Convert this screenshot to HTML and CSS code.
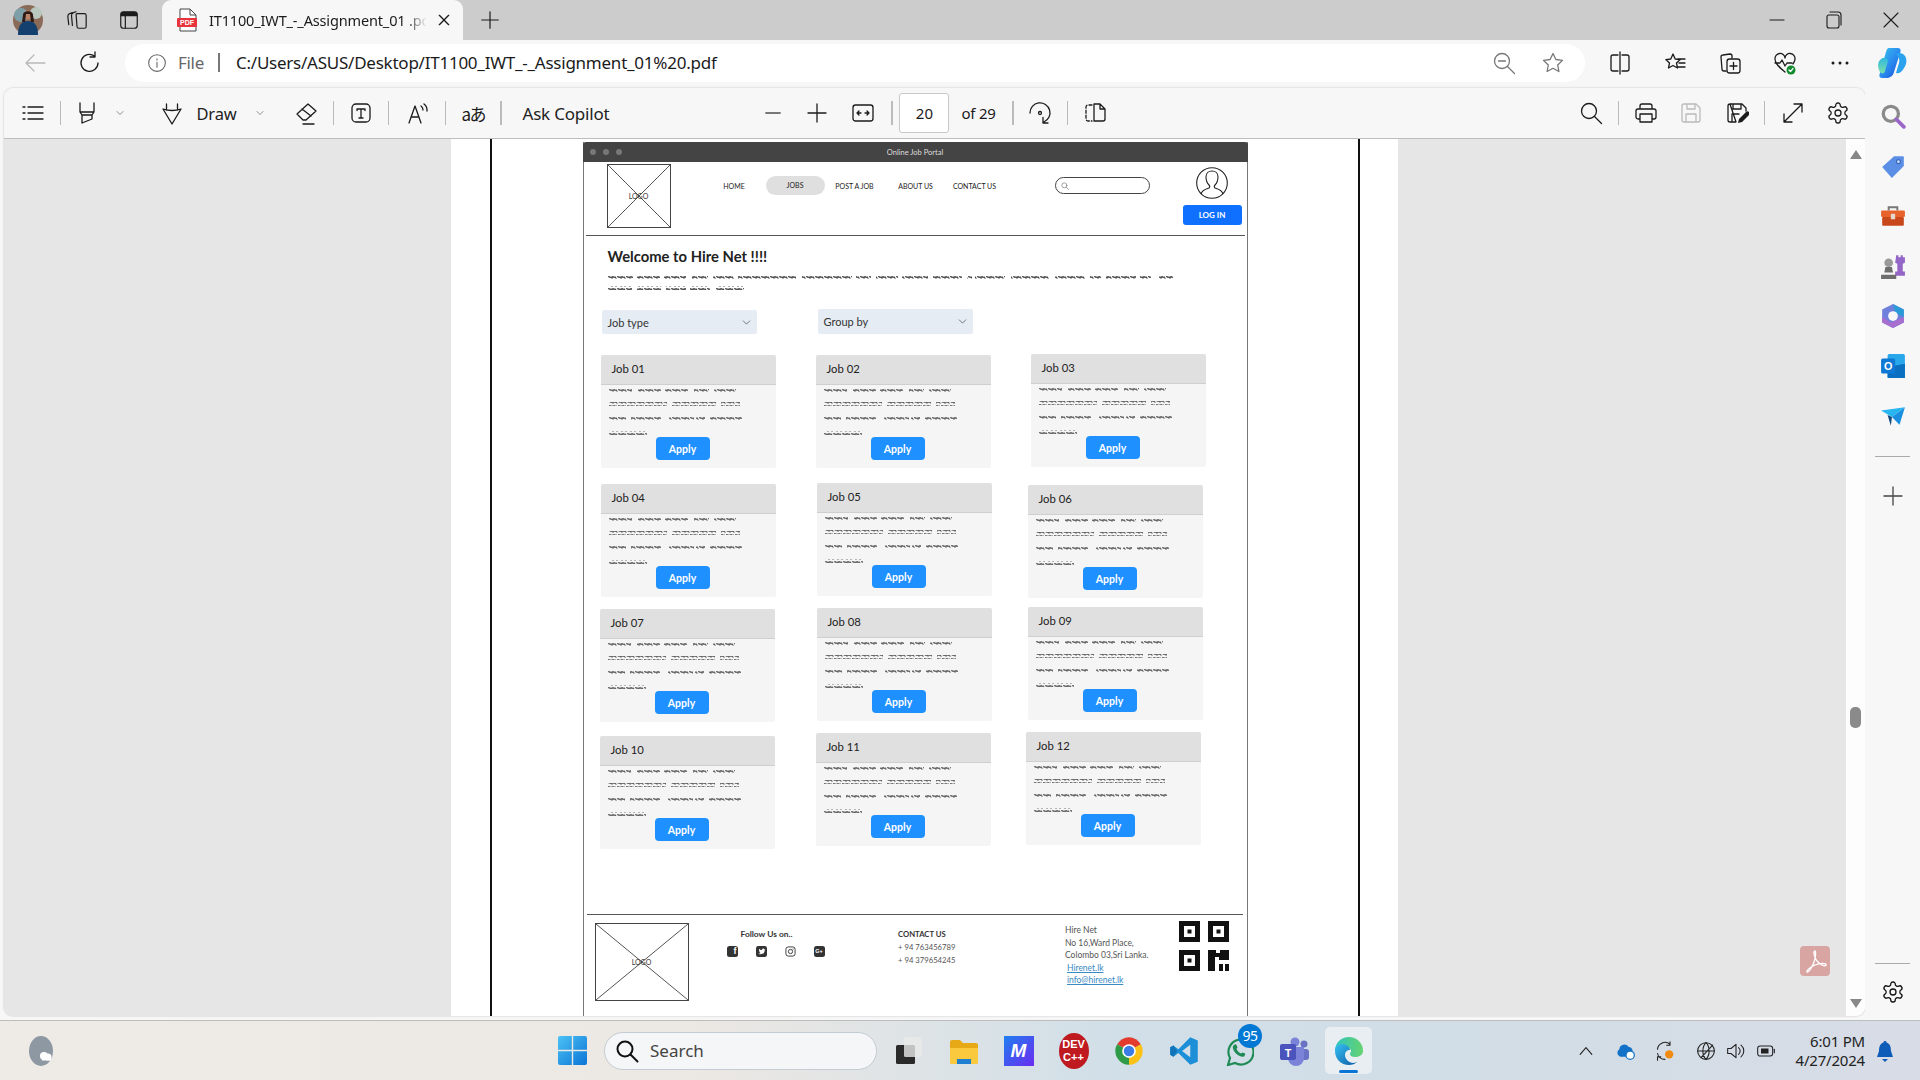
FILE: index.html
```html
<!DOCTYPE html>
<html lang="en">
<head>
<meta charset="utf-8">
<title>IT1100_IWT_-_Assignment_01 .pdf</title>
<link rel="stylesheet" href="styles.css">
</head>
<body>
<svg class="defs" aria-hidden="true">
  <defs>
    <pattern id="wave" width="9" height="4" patternUnits="userSpaceOnUse"><path d="M0 2.500L1 1 2 3 3 1.500 4 3.500 5 1 6 3 7 1.500 8 3.500 9 2.500" fill="none" stroke="#2a2a2a" stroke-width=".85"/></pattern>
    <linearGradient id="cop" x1="0" y1="0" x2="1" y2="1"><stop offset="0" stop-color="#38c6e8"/><stop offset=".5" stop-color="#2b8df0"/><stop offset="1" stop-color="#1a4fd8"/></linearGradient>
    <linearGradient id="cop2" x1="0" y1="0" x2="0" y2="1"><stop offset="0" stop-color="#2fb8e0"/><stop offset="1" stop-color="#7ce0a8"/></linearGradient>
    <linearGradient id="edge" x1="0" y1="0" x2="1" y2="1"><stop offset="0" stop-color="#35c1f1"/><stop offset="1" stop-color="#0c59a4"/></linearGradient>
    <linearGradient id="edge2" x1="0" y1="0" x2="1" y2="0"><stop offset="0" stop-color="#2fc4c0"/><stop offset="1" stop-color="#66d36e"/></linearGradient>
    <linearGradient id="win" x1="0" y1="0" x2="1" y2="1"><stop offset="0" stop-color="#4cc2f5"/><stop offset="1" stop-color="#0a74d6"/></linearGradient>
    <symbol id="i-list" viewBox="0 0 24 24"><path d="M2 6h2M7 6h15M2 12h2M7 12h15M2 18h2M7 18h15"/></symbol>
    <symbol id="i-hl" viewBox="0 0 24 24"><path d="M5 2v9l2 3v8l10-4v-4l2-3V2M5 11h14M7 14h10"/></symbol>
    <symbol id="i-chev" viewBox="0 0 24 24"><path d="M6 9l6 6 6-6"/></symbol>
    <symbol id="i-pen" viewBox="0 0 24 24"><path d="M12 23L3 8c6 2 12 2 18 0zM6.500 9V3M17.500 9V3"/></symbol>
    <symbol id="i-eraser" viewBox="0 0 24 24"><path d="M14 3l8 7-10 9H9l-6-6zM8 8l9 7M9 23h11"/></symbol>
    <symbol id="i-tbox" viewBox="0 0 24 24"><rect x="3" y="3" width="18" height="18" rx="4"/><path d="M8 8h8M8 8v1.500M16 8v1.500M12 8v9M10 17h4"/></symbol>
    <symbol id="i-read" viewBox="0 0 24 24"><path d="M3 22L9 5l6 17M5 16h8M15 5a5 5 0 0 1 2 4M18 3a8 8 0 0 1 3 7"/></symbol>
    <symbol id="i-minus" viewBox="0 0 24 24"><path d="M5 12h14"/></symbol>
    <symbol id="i-plus" viewBox="0 0 24 24"><path d="M12 3v18M3 12h18"/></symbol>
    <symbol id="i-fit" viewBox="0 0 24 24"><rect x="2" y="4" width="20" height="16" rx="2.500"/><path d="M6 12h4M6 12l2-2M6 12l2 2M18 12h-4M18 12l-2-2M18 12l-2 2"/></symbol>
    <symbol id="i-rotate" viewBox="0 0 24 24"><path d="M2 12A10 10 0 1 1 16 21M15 16.500V22h5"/><circle cx="12" cy="12" r="1.500"/></symbol>
    <symbol id="i-pages" viewBox="0 0 24 24"><path d="M9 4H5a2 2 0 0 0-2 2v12a2 2 0 0 0 2 2h4" stroke-dasharray="3 2"/><path d="M11 3h6l5 5v10a2 2 0 0 1-2 2h-9zM17 3v5h5"/></symbol>
    <symbol id="i-search" viewBox="0 0 24 24"><circle cx="10" cy="10" r="7.500"/><path d="M15.500 15.500l7 7"/></symbol>
    <symbol id="i-print" viewBox="0 0 24 24"><path d="M6 8V5a2 2 0 0 1 2-2h8a2 2 0 0 1 2 2v3M6 18H4a2 2 0 0 1-2-2v-6a2 2 0 0 1 2-2h16a2 2 0 0 1 2 2v6a2 2 0 0 1-2 2h-2M6 13h12v8H6z"/></symbol>
    <symbol id="i-save" viewBox="0 0 24 24"><path d="M5 3h12l4 4v12a2 2 0 0 1-2 2H5a2 2 0 0 1-2-2V5a2 2 0 0 1 2-2zM8 3v5h8V3M7 21v-8h10v8"/></symbol>
    <symbol id="i-saveas" viewBox="0 0 24 24"><path d="M5 3h12l4 4v3M11 21H5a2 2 0 0 1-2-2V5a2 2 0 0 1 2-2zM8 3v5h8V3M7 21v-8h7"/><path class="solid" d="M13 22l1-4 7-7a2 2 0 0 1 3 3l-7 7z"/></symbol>
    <symbol id="i-expand" viewBox="0 0 24 24"><path d="M3 21L21 3M13 3h8v8M3 13v8h8"/></symbol>
    <symbol id="i-gear" viewBox="0 0 24 24"><path d="M12.220 2h-.44a2 2 0 0 0-2 2v.18a2 2 0 0 1-1 1.730l-.43.25a2 2 0 0 1-2 0l-.15-.08a2 2 0 0 0-2.730.73l-.22.38a2 2 0 0 0 .73 2.730l.15.1a2 2 0 0 1 1 1.720v.51a2 2 0 0 1-1 1.740l-.15.09a2 2 0 0 0-.73 2.730l.22.38a2 2 0 0 0 2.730.73l.15-.08a2 2 0 0 1 2 0l.43.25a2 2 0 0 1 1 1.730V20a2 2 0 0 0 2 2h.44a2 2 0 0 0 2-2v-.18a2 2 0 0 1 1-1.730l.43-.25a2 2 0 0 1 2 0l.15.08a2 2 0 0 0 2.730-.73l.22-.39a2 2 0 0 0-.73-2.730l-.15-.08a2 2 0 0 1-1-1.740v-.5a2 2 0 0 1 1-1.740l.15-.09a2 2 0 0 0 .73-2.730l-.22-.38a2 2 0 0 0-2.730-.73l-.15.08a2 2 0 0 1-2 0l-.43-.25a2 2 0 0 1-1-1.730V4a2 2 0 0 0-2-2z"/><circle cx="12" cy="12" r="3"/></symbol>
    <symbol id="i-star" viewBox="0 0 24 24"><path d="M12 2.500l2.900 6 6.600.9-4.800 4.600 1.200 6.500L12 17.300l-5.900 3.200 1.200-6.500L2.500 9.400l6.600-.9z"/></symbol>
    <symbol id="i-job" viewBox="0 0 170 48"><g fill="url(#wave)"><rect x="0" y="0" width="23" height="4"/><rect x="29" y="0" width="23" height="4"/><rect x="56" y="0" width="23" height="4"/><rect x="85" y="0" width="15" height="4"/><rect x="105" y="0" width="22" height="4"/><rect x="0" y="14" width="58" height="4"/><rect x="63" y="14" width="44" height="4"/><rect x="112" y="14" width="19" height="4"/><rect x="0" y="29" width="17" height="4"/><rect x="22" y="29" width="30" height="4"/><rect x="60" y="29" width="25" height="4"/><rect x="87" y="29" width="9" height="4"/><rect x="101" y="29" width="32" height="4"/><rect x="0" y="43" width="38" height="4"/></g></symbol>
    <symbol id="i-intro" viewBox="0 0 570 18"><g fill="url(#wave)"><rect x="0" y="0" width="25" height="4"/><rect x="29" y="0" width="23" height="4"/><rect x="56" y="0" width="22" height="4"/><rect x="84" y="0" width="16" height="4"/><rect x="105" y="0" width="21" height="4"/><rect x="130" y="0" width="58" height="4"/><rect x="194" y="0" width="50" height="4"/><rect x="248" y="0" width="15" height="4"/><rect x="268" y="0" width="22" height="4"/><rect x="294" y="0" width="26" height="4"/><rect x="325" y="0" width="29" height="4"/><rect x="359" y="0" width="5" height="4"/><rect x="367" y="0" width="30" height="4"/><rect x="403" y="0" width="38" height="4"/><rect x="447" y="0" width="30" height="4"/><rect x="482" y="0" width="11" height="4"/><rect x="498" y="0" width="30" height="4"/><rect x="532" y="0" width="11" height="4"/><rect x="551" y="0" width="14" height="4"/><rect x="0" y="11" width="24" height="4"/><rect x="29" y="11" width="24" height="4"/><rect x="58" y="11" width="20" height="4"/><rect x="82" y="11" width="20" height="4"/><rect x="108" y="11" width="28" height="4"/></g></symbol>
    <symbol id="i-cross" viewBox="0 0 100 100" preserveAspectRatio="none"><path d="M0 0L100 100M100 0L0 100" vector-effect="non-scaling-stroke"/></symbol>
  </defs>
</svg>

<header class="tabstrip">
  <svg class="avatar" viewBox="0 0 30 30"><circle cx="15" cy="15" r="15" fill="#8b6a58"/><circle cx="8" cy="10" r="7" fill="#7da0a8"/><circle cx="23" cy="8" r="6" fill="#b9c9c0"/><path d="M5 30c0-9 3-14 10-14s10 5 10 14z" fill="#14406f"/><circle cx="15" cy="10" r="4.500" fill="#b98468"/><path d="M10 10c0-5 10-5 10 0l1 7h-3l-1-8h-4l-1 8H9z" fill="#2d1b14"/></svg>
  <svg class="ic ic-tab ml-collections" viewBox="0 0 24 24"><path d="M7 4l-3 1c-2 1-2 2-2 3l1 9M11 3L8 4C6 5 6 6 6 7l1 11"/><path d="M12 5h8a2 2 0 0 1 2 2v12a2 2 0 0 1-2 2h-6a2 2 0 0 1-2-2l-1-13a1 1 0 0 1 1-1z"/></svg>
  <svg class="ic ic-tab ml-vtabs" viewBox="0 0 24 24"><rect x="3" y="3" width="18" height="18" rx="3"/><path class="solid" d="M3 6a3 3 0 0 1 3-3h12a3 3 0 0 1 3 3v2H3z"/><path d="M8 8v13"/></svg>
  <div class="tab">
    <svg class="tab-icon" viewBox="0 0 24 24"><path d="M5 1h10l6 6v16H5z" fill="#fff" stroke="#444" stroke-width="1"/><path d="M15 1v6h6" fill="none" stroke="#444" stroke-width="1"/><rect x="2" y="10" width="20" height="9" rx="1" fill="#e8343c"/><text x="12" y="17.200" class="tab-icon-text">PDF</text></svg>
    <span class="tab-title">IT1100_IWT_-_Assignment_01 .pdf</span>
    <svg class="ic ic-close" viewBox="0 0 24 24"><path d="M5 5l14 14M19 5L5 19"/></svg>
  </div>
  <svg class="ic ic-tab ml-new" viewBox="0 0 24 24"><use href="#i-plus"/></svg>
  <div class="win-controls">
    <svg class="ic ic-win" viewBox="0 0 24 24"><path d="M5 12h14"/></svg>
    <svg class="ic ic-win" viewBox="0 0 24 24"><rect x="5" y="7" width="12" height="13" rx="2"/><path d="M8 4h8a3 3 0 0 1 3 3v10"/></svg>
    <svg class="ic ic-win" viewBox="0 0 24 24"><path d="M5 5l14 14M19 5L5 19"/></svg>
  </div>
</header>

<nav class="addressbar">
  <svg class="ic ic-back" viewBox="0 0 24 24"><path d="M22 12H3M11 4l-8 8 8 8"/></svg>
  <svg class="ic ic-refresh" viewBox="0 0 24 24"><path d="M20 12a8.500 8.500 0 1 1-3.500-7M17 1v5h-5"/></svg>
  <div class="omnibox">
    <svg class="ic ic-info" viewBox="0 0 24 24"><circle cx="12" cy="12" r="10"/><path d="M12 11v6M12 7v1.500"/></svg>
    <span class="omni-file">File</span>
    <span class="omni-sep"></span>
    <span class="omni-url">C:/Users/ASUS/Desktop/IT1100_IWT_-_Assignment_01%20.pdf</span>
    <svg class="ic ic-zoomout" viewBox="0 0 24 24"><circle cx="10" cy="10" r="7.500"/><path d="M15.500 15.500l7 7M6.500 10h7"/></svg>
    <svg class="ic ic-star" viewBox="0 0 24 24"><use href="#i-star"/></svg>
  </div>
  <div class="ab-tools">
    <svg class="ic" viewBox="0 0 24 24"><path d="M10 4H5a2 2 0 0 0-2 2v12a2 2 0 0 0 2 2h5M14 4h5a2 2 0 0 1 2 2v12a2 2 0 0 1-2 2h-5M12 1v22"/></svg>
    <svg class="ic" viewBox="0 0 24 24"><path d="M10 3l2.200 5 5 .6-3.700 3.400 1 5L10 14.500 5.500 17l1-5L2.800 8.600l5-.6zM15 8h7M16 12h6M15 16h7"/></svg>
    <svg class="ic" viewBox="0 0 24 24"><path d="M8 20H6a2 2 0 0 1-2-2L3 6a2 2 0 0 1 2-2l7-1a2 2 0 0 1 2 2v2"/><rect x="9" y="8" width="13" height="14" rx="2.500"/><path d="M15.500 11.500v7M12 15h7"/></svg>
    <svg class="ic" viewBox="0 0 24 24"><path d="M12 21C7 17 2 13 2 8a5 5 0 0 1 10-1 5 5 0 0 1 10 1c0 2-1 3-2 5M2 12h5l2-3 3 6 2-3h5"/><circle class="ok" cx="18" cy="19" r="4.500"/><path class="ok-mark" d="M16 19l1.500 1.500 2.500-3"/></svg>
    <svg class="ic ic-dots" viewBox="0 0 24 24"><circle cx="5" cy="12" r="1.500"/><circle cx="12" cy="12" r="1.500"/><circle cx="19" cy="12" r="1.500"/></svg>
    <svg class="copilot" viewBox="0 0 30 32"><path d="M12 1h9c3 0 3 3 2 5l-6 19c-1 4-4 6-8 6H5c-3 0-3-3-2-5L9 5c.5-2 1.500-4 3-4z" fill="url(#cop)"/><path d="M3 13c3-3 7-3 8 1l-3 10c-1 3-3 3-5 1-2-3-3-9 0-12z" fill="url(#cop2)"/><path d="M19 7c3-2 7-1 9 2s2 8-1 12c-2 4-5 6-8 5l3-10c1-3 0-6-3-9z" fill="#2aa2ee"/></svg>
  </div>
</nav>

<div class="workspace">
  <main class="viewer">
    <div class="pdf-toolbar">
      <svg class="ic"><use href="#i-list"/></svg>
      <span class="sep"></span>
      <svg class="ic tb-hl"><use href="#i-hl"/></svg>
      <svg class="ic ic-chev"><use href="#i-chev"/></svg>
      <svg class="ic tb-pen"><use href="#i-pen"/></svg>
      <span class="tool-label tb-draw">Draw</span>
      <svg class="ic ic-chev tb-chev2"><use href="#i-chev"/></svg>
      <svg class="ic tb-eraser"><use href="#i-eraser"/></svg>
      <span class="sep"></span>
      <svg class="ic"><use href="#i-tbox"/></svg>
      <span class="sep"></span>
      <svg class="ic tb-read"><use href="#i-read"/></svg>
      <span class="sep"></span>
      <span class="translate">aあ</span>
      <span class="sep sep-bold"></span>
      <span class="tool-label tb-ask">Ask Copilot</span>
      <svg class="ic ic-minus tb-zoomout"><use href="#i-minus"/></svg>
      <svg class="ic tb-zoomin"><use href="#i-plus"/></svg>
      <svg class="ic tb-fit"><use href="#i-fit"/></svg>
      <span class="sep sep-bold tb-s1"></span>
      <span class="page-box">20</span>
      <span class="page-of">of 29</span>
      <span class="sep sep-bold tb-s1"></span>
      <svg class="ic tb-rot"><use href="#i-rotate"/></svg>
      <span class="sep"></span>
      <svg class="ic"><use href="#i-pages"/></svg>
      <svg class="ic tools-end"><use href="#i-search"/></svg>
      <span class="sep"></span>
      <svg class="ic"><use href="#i-print"/></svg>
      <svg class="ic ic-disabled tb-r6"><use href="#i-save"/></svg>
      <svg class="ic tb-r7"><use href="#i-saveas"/></svg>
      <span class="sep"></span>
      <svg class="ic tb-s1"><use href="#i-expand"/></svg>
      <svg class="ic tb-r6"><use href="#i-gear"/></svg>
    </div>

    <div class="pdf-row">
      <div class="pdf-view">
        <article class="pdf-page">
          <div class="page-rule">
            <section class="mock">
              <div class="mock-title">
                <span class="dots"><i></i><i></i><i></i></span>
                <span class="mock-title-text">Online Job Portal</span>
              </div>
              <div class="mock-head">
                <div class="logo-box logo-head"><svg class="cross"><use href="#i-cross"/></svg><span>LOGO</span></div>
                <ul class="mock-nav">
                  <li class="nav-home">HOME</li>
                  <li class="nav-jobs">JOBS</li>
                  <li class="nav-post">POST A JOB</li>
                  <li class="nav-about">ABOUT US</li>
                  <li class="nav-contact">CONTACT US</li>
                </ul>
                <div class="mock-search"><svg class="ic ic-mini" viewBox="0 0 24 24"><use href="#i-search"/></svg></div>
                <div class="mock-user">
                  <svg class="user-icon" viewBox="0 0 32 32"><circle cx="16" cy="16" r="15.300"/><path d="M5 27c1-4 5-5 8-6 1-1 1-2 0-3-2-2-3-5-3-8 0-4 3-6 6-6s6 2 6 6c0 3-1 6-3 8-1 1-1 2 0 3 3 1 7 2 8 6"/></svg>
                  <button class="login">LOG IN</button>
                </div>
              </div>
              <div class="mock-body">
                <h1>Welcome to Hire Net !!!!</h1>
                <svg class="intro"><use href="#i-intro"/></svg>
                <div class="filters">
                  <div class="select">Job type<svg class="ic ic-sel" viewBox="0 0 24 24"><use href="#i-chev"/></svg></div>
                  <div class="select select-2">Group by<svg class="ic ic-sel" viewBox="0 0 24 24"><use href="#i-chev"/></svg></div>
                </div>
                <div class="cards">
                  <div class="card c1"><h2>Job 01</h2><svg class="job-text"><use href="#i-job"/></svg><button class="apply">Apply</button></div>
                  <div class="card c2"><h2>Job 02</h2><svg class="job-text"><use href="#i-job"/></svg><button class="apply">Apply</button></div>
                  <div class="card c3"><h2>Job 03</h2><svg class="job-text"><use href="#i-job"/></svg><button class="apply">Apply</button></div>
                  <div class="card c4"><h2>Job 04</h2><svg class="job-text"><use href="#i-job"/></svg><button class="apply">Apply</button></div>
                  <div class="card c5"><h2>Job 05</h2><svg class="job-text"><use href="#i-job"/></svg><button class="apply">Apply</button></div>
                  <div class="card c6"><h2>Job 06</h2><svg class="job-text"><use href="#i-job"/></svg><button class="apply">Apply</button></div>
                  <div class="card c7"><h2>Job 07</h2><svg class="job-text"><use href="#i-job"/></svg><button class="apply">Apply</button></div>
                  <div class="card c8"><h2>Job 08</h2><svg class="job-text"><use href="#i-job"/></svg><button class="apply">Apply</button></div>
                  <div class="card c9"><h2>Job 09</h2><svg class="job-text"><use href="#i-job"/></svg><button class="apply">Apply</button></div>
                  <div class="card c10"><h2>Job 10</h2><svg class="job-text"><use href="#i-job"/></svg><button class="apply">Apply</button></div>
                  <div class="card c11"><h2>Job 11</h2><svg class="job-text"><use href="#i-job"/></svg><button class="apply">Apply</button></div>
                  <div class="card c12"><h2>Job 12</h2><svg class="job-text"><use href="#i-job"/></svg><button class="apply">Apply</button></div>
                </div>
              </div>
              <footer class="mock-foot">
                <div class="logo-box logo-foot"><svg class="cross"><use href="#i-cross"/></svg><span>LOGO</span></div>
                <div class="follow">
                  <strong>Follow Us on..</strong>
                  <div class="socials">
                    <span class="soc">f</span>
                    <svg class="soc-svg" viewBox="0 0 12 12"><rect width="12" height="12" rx="2.500" fill="#333"/><path d="M2.500 8.500c3 1.500 7 0 7-4l.8-1-1 .2-.6-.8c-1-.6-2.300.2-2 1.500-1.500 0-2.600-.7-3.300-1.500-.4 1 0 1.800.5 2.200l-.7-.1c0 .8.500 1.400 1.300 1.600-.3.1-.5.1-.7 0 .2.600.8 1 1.400 1-.6.600-1.500.9-2.700.9z" fill="#fff"/></svg>
                    <svg class="soc-svg" viewBox="0 0 12 12"><rect x="1" y="1" width="10" height="10" rx="2.500" fill="none" stroke="#333"/><circle cx="6" cy="6" r="2.300" fill="none" stroke="#333"/><circle cx="8.800" cy="3.200" r=".6" fill="#333"/></svg>
                    <span class="soc soc-g">G+</span>
                  </div>
                </div>
                <div class="contact">
                  <strong>CONTACT US</strong>
                  <span>+ 94 763456789</span>
                  <span>+ 94 379654245</span>
                </div>
                <div class="address">
                  <span>Hire Net</span>
                  <span>No 16,Ward Place,</span>
                  <span>Colombo 03,Sri Lanka.</span>
                  <a class="link">Hirenet.lk</a>
                  <a class="link">info@hirenet.lk</a>
                </div>
                <svg class="qr" viewBox="0 0 50 50"><g fill="none" stroke="#111" stroke-width="5"><rect x="2.500" y="2.500" width="16" height="16"/><rect x="31.500" y="2.500" width="16" height="16"/><rect x="2.500" y="31.500" width="16" height="16"/></g><g fill="#111"><rect x="8.500" y="8.500" width="4" height="4"/><rect x="37.500" y="8.500" width="4" height="4"/><rect x="8.500" y="37.500" width="4" height="4"/><path d="M29 29h8v3h4v-3h9v10H40v-3h-4v14h-7z"/><rect x="40" y="43" width="4" height="7"/><rect x="46" y="43" width="4" height="7"/></g></svg>
              </footer>
            </section>
          </div>
        </article>
        <svg class="acrobat" viewBox="0 0 30 30"><rect width="30" height="30" rx="4" fill="#d8a5a3"/><path d="M15 5c-2 0-1 6 2 10s8 6 9 4-6-2-11 0-9 6-8 7 6-5 8-13c.5-3 1-8 0-8z" fill="none" stroke="#fff" stroke-width="1.300"/></svg>
      </div>
      <div class="scrollbar">
        <i class="arrow-up"></i>
        <i class="thumb"></i>
        <i class="arrow-down"></i>
      </div>
    </div>
  </main>

  <aside class="sidebar">
    <svg class="side-ic" viewBox="0 0 24 24"><circle cx="10" cy="10" r="7" fill="none" stroke="#8a8a8a" stroke-width="3"/><path d="M15 15l7 7" stroke="#9a67c9" stroke-width="3.500" stroke-linecap="round"/></svg>
    <svg class="side-ic" viewBox="0 0 24 24"><path d="M2 13L13 3h8a1 1 0 0 1 1 1v8L11 23z" fill="#5b8fe6"/><circle cx="17" cy="8" r="1.800" fill="#cfe0ff" stroke="#2f5fb3"/></svg>
    <svg class="side-ic" viewBox="0 0 24 24"><path d="M8 7V4h8v3" fill="none" stroke="#777" stroke-width="1.800"/><rect x="1" y="7" width="22" height="6" rx="1" fill="#e8622c"/><rect x="2" y="13" width="20" height="8" rx="1" fill="#c8481c"/><rect x="10" y="10" width="4" height="5" fill="#e6d7cf"/></svg>
    <svg class="side-ic" viewBox="0 0 24 24"><path d="M15 2h2v2h2V2h2v2h2v5l-2 1v7h2v4h-9v-4h2v-7l-2-1z" fill="#9466c8"/><circle cx="8" cy="9" r="4" fill="#9a9a9a"/><path d="M5 13h6l1 5H4zM1 20h14v4H1z" fill="#6e6e6e"/></svg>
    <svg class="side-ic" viewBox="0 0 24 24"><path d="M12 1l10 5v12l-10 5L2 18V6z" fill="#6f7fdc"/><path d="M12 1l10 5v7l-8-4z" fill="#2b9bd8"/><path d="M2 13l8 5 12-5v5l-10 5-10-5z" fill="#a66fd0"/><circle cx="12" cy="12" r="4.500" fill="#f7f7f7"/></svg>
    <svg class="side-ic" viewBox="0 0 24 24"><rect x="7" y="1" width="16" height="22" rx="1.500" fill="#28a8ea"/><path d="M7 13l16-3v13H7z" fill="#0a6fc0"/><rect x="1" y="5" width="13" height="14" rx="1.500" fill="#0f78d4"/><text x="7.500" y="15.800" class="outlook-text">O</text></svg>
    <svg class="side-ic" viewBox="0 0 24 24"><path d="M1 7l22-3-12 9z" fill="#29b6f0"/><path d="M23 4L11 13l7 7z" fill="#1a8fe0"/><path d="M7 11l4 2-1 8z" fill="#12467a"/></svg>
    <span class="side-rule"></span>
    <svg class="ic side-plus" viewBox="0 0 24 24"><use href="#i-plus"/></svg>
    <span class="side-rule side-rule-low"></span>
    <svg class="ic side-gear"><use href="#i-gear"/></svg>
  </aside>
</div>

<footer class="taskbar">
  <svg class="weather" viewBox="0 0 24 30"><ellipse cx="12" cy="15" rx="12" ry="15" fill="#8d98a3"/><circle cx="15" cy="20" r="4" fill="#fff"/><circle cx="19" cy="21" r="3.500" fill="#fff"/><rect x="13" y="20" width="9" height="4.500" fill="#fff"/></svg>
  <svg class="winlogo" viewBox="0 0 29 29"><path d="M0 2a2 2 0 0 1 2-2h11.800v13.800H0zM15.200 0H27a2 2 0 0 1 2 2v11.800H15.200zM0 15.200h13.800V29H2a2 2 0 0 1-2-2zM15.200 15.200H29V27a2 2 0 0 1-2 2H15.200z" fill="url(#win)"/></svg>
  <div class="tb-search">
    <svg class="ic ic-tbsearch" viewBox="0 0 24 24"><use href="#i-search"/></svg>
    <span>Search</span>
  </div>
  <div class="tb-apps">
    <span class="tb-slot"><svg class="tb-ic" viewBox="0 0 30 30"><rect x="2" y="9" width="19" height="19" rx="1.500" fill="#2a2a2a"/><rect x="10" y="1" width="18" height="20" rx="1.500" fill="#e9e9e9" fill-opacity=".8"/></svg></span>
    <span class="tb-slot"><svg class="tb-ic" viewBox="0 0 30 30"><path d="M1 6a2 2 0 0 1 2-2h8l3 3h13a2 2 0 0 1 2 2v17a2 2 0 0 1-2 2H3a2 2 0 0 1-2-2z" fill="#e8a916"/><path d="M1 12h28v14a2 2 0 0 1-2 2H3a2 2 0 0 1-2-2z" fill="#fbc93d"/><rect x="8" y="23" width="14" height="5" fill="#1e7fd0"/></svg></span>
    <span class="tb-slot"><span class="app-m">M</span></span>
    <span class="tb-slot"><span class="app-dev">DEV<br>C++</span></span>
    <span class="tb-slot"><svg class="tb-ic" viewBox="0 0 24 24"><path d="M12 12L2.500 6.500A11 11 0 0 1 21.500 6.500z" fill="#e33b2e"/><path d="M12 12L21.500 6.500A11 11 0 0 1 12 23z" fill="#fbc116"/><path d="M12 12L12 23A11 11 0 0 1 2.500 6.500z" fill="#2d9b47"/><circle cx="12" cy="12" r="5.500" fill="#fff"/><circle cx="12" cy="12" r="4.200" fill="#3a7de8"/></svg></span>
    <span class="tb-slot"><svg class="tb-ic" viewBox="0 0 24 24"><path d="M17 1L7.500 10.500 3.500 7.500 1 9v6l2.500 1.500 4-3L17 23l6-2.500v-17z" fill="#1c8fd8"/><path d="M17 7L10.500 12 17 17z" fill="#d2dfe8"/><path d="M1 9l2.500-1.500 3 4.500-3 4.500L1 15z" fill="#1274b8"/></svg></span>
    <span class="tb-slot"><svg class="tb-ic" viewBox="0 0 30 30"><path d="M4 29l2-7a12.500 12.500 0 1 1 5 5z" fill="none" stroke="#1e8a55" stroke-width="2.200"/><path d="M10 9c1-1 2-1 2.500 0l1 2.500-1 1.500c1 2 2.500 3.500 4.500 4.500l1.500-1 2.500 1c.5.5 0 2-1 3-3 1.500-10-3-11-8-.5-1.500 0-3 1-3.500z" fill="#1e8a55"/></svg><b class="badge">95</b></span>
    <span class="tb-slot"><svg class="tb-ic" viewBox="0 0 30 30"><circle cx="25" cy="8" r="3.500" fill="#6a72c4"/><rect x="20" y="13" width="10" height="11" rx="3" fill="#6a72c4"/><circle cx="16" cy="6" r="4.500" fill="#7b83d8"/><path d="M9 11h16v11a8 8 0 0 1-16 0z" fill="#7b83d8"/><rect x="1" y="8" width="16" height="16" rx="2" fill="#4b53bc"/><text x="9" y="20.500" class="teams-text">T</text></svg></span>
    <span class="tb-slot tb-active"><svg class="tb-ic" viewBox="0 0 30 30"><path d="M15 1a14 14 0 0 1 14 14c0 4-4 6-8 6-3 0-5-1-5-3 0-1 1-2 1-3 0-3-5-6-9-4C3 13 1 16 1 15 1 7 7 1 15 1z" fill="url(#edge2)"/><path d="M1 15C1 8 8 7 12 9c3 1 4 4 4 5-3 0-5 2-5 5 0 4 4 8 8 8 2 0 4-1 5-2-3 3-6 4-9 4C7 29 1 23 1 15z" fill="url(#edge)"/></svg><i class="tb-ind"></i></span>
  </div>
  <div class="tray">
    <svg class="ic tray-ic" viewBox="0 0 24 24"><path d="M5 16l7-8 7 8"/></svg>
    <svg class="tray-ic tr-20" viewBox="0 0 24 24"><path d="M5 19a5 5 0 0 1-1-9 6 6 0 0 1 11-3 6 6 0 0 1 5 5l-8 7z" fill="#1372c8"/><circle cx="17" cy="17" r="5" fill="#fff" stroke="#1372c8" stroke-width="1.500"/></svg>
    <svg class="ic tray-ic tr-19" viewBox="0 0 24 24"><path d="M3 10a9 9 0 0 1 15-6M18 1v4h-4M12 22a9 9 0 0 1-9-7M3 23v-4h4"/><circle class="tray-orange" cx="17" cy="16" r="5"/></svg>
    <svg class="ic tray-ic tr-21" viewBox="0 0 24 24"><circle cx="12" cy="12" r="10"/><path d="M2 12h20M12 2c-5 5-5 15 0 20M12 2c5 5 5 15 0 20M6 20L20 5"/></svg>
    <svg class="ic tray-ic tr-10" viewBox="0 0 24 24"><path d="M2 9h4l6-5v16l-6-5H2zM15 8a5 5 0 0 1 0 8M18 5a9 9 0 0 1 0 14"/></svg>
    <svg class="ic tray-ic tr-10" viewBox="0 0 24 24"><rect x="2" y="6" width="18" height="12" rx="3"/><path class="solid" d="M6 9h9v6H6z"/><path d="M22 10v4"/></svg>
    <div class="clock"><span>6:01 PM</span><span>4/27/2024</span></div>
    <svg class="bell" viewBox="0 0 24 24"><path d="M12 2c1 0 1.500.5 1.500 1.500C17 4.500 18 8 18 12l2 6H4l2-6c0-4 1-7.500 4.500-8.500C10.500 2.500 11 2 12 2z" fill="#0f5cb8"/><path d="M9 20h6l-3 3z" fill="#0f5cb8"/></svg>
  </div>
</footer>
</body>
</html>
```
FILE: styles.css
```css
* { box-sizing: border-box; }
html, body { margin: 0; padding: 0; }
body {
  width: 1920px;
  height: 1080px;
  overflow: hidden;
  display: flex;
  flex-direction: column;
  background: #f7f7f7;
  color: #1b1b1b;
  font-family: "Noto Sans", "Open Sans", sans-serif;
}
.defs { position: absolute; width: 0; height: 0; }
.ic {
  flex: none;
  width: 24px;
  height: 24px;
  fill: none;
  stroke: currentColor;
  stroke-width: 1.3;
  stroke-linejoin: round;
  stroke-linecap: round;
}
.ic .solid, .solid { fill: currentColor; stroke: none; }

/* tab strip */
.tabstrip {
  flex: none;
  height: 40px;
  background: #cccccc;
  display: flex;
  align-items: center;
  padding: 0 17px 0 13px;
}
.avatar { width: 30px; height: 30px; flex: none; }
.ic-tab { width: 22px; height: 22px; }
.ml-collections { margin-left: 23px; }
.ml-vtabs { margin-left: 30px; }
.tab {
  height: 40px;
  width: 301px;
  margin-left: 22px;
  background: #f7f7f7;
  border-radius: 9px 9px 0 0;
  display: flex;
  align-items: center;
  padding-left: 13px;
}
.tab-icon { width: 24px; height: 24px; flex: none; }
.tab-icon-text { font: 700 7px "Liberation Sans", sans-serif; fill: #fff; text-anchor: middle; }
.tab-title {
  width: 218px;
  margin-left: 10px;
  font-size: 14.5px;
  letter-spacing: -.15px;
  white-space: nowrap;
  overflow: hidden;
  -webkit-mask-image: linear-gradient(90deg, #000 90%, transparent);
  mask-image: linear-gradient(90deg, #000 90%, transparent);
}
.ic-close { width: 16px; height: 16px; margin-left: 9px; stroke-width: 2; }
.ml-new { margin-left: 16px; }
.win-controls { margin-left: auto; display: flex; gap: 33px; }
.ic-win { width: 24px; height: 24px; stroke-width: 1.1; }

/* address bar */
.addressbar {
  flex: none;
  height: 48px;
  display: flex;
  align-items: center;
  padding: 0 13px 3px 23px;
  background: #f7f7f7;
}
.ic-back { color: #b9b9b9; }
.ic-refresh { margin-left: 31px; }
.omnibox {
  flex: none;
  width: 1460px;
  height: 38px;
  margin-left: 23px;
  padding: 0 20px 0 22px;
  background: #fff;
  border-radius: 19px;
  display: flex;
  align-items: center;
}
.ic-info { width: 20px; height: 20px; color: #666; }
.omni-file { margin-left: 11px; font-size: 17px; color: #666; letter-spacing: -.3px; }
.omni-sep { width: 2px; height: 19px; margin-left: 14px; background: #777; }
.omni-url { margin-left: 16px; font-size: 17px; letter-spacing: -.24px; white-space: nowrap; }
.ic-zoomout { margin-left: auto; color: #777; }
.ic-star { margin-left: 25px; color: #777; }
.ab-tools { display: flex; align-items: center; gap: 31px; margin-left: 23px; }
.ic-dots { fill: currentColor; stroke: none; }
.ok { fill: #128a2e; stroke: none; }
.ok-mark { stroke: #fff; stroke-width: 1.2; }
.copilot { width: 30px; height: 32px; margin-left: -6px; flex: none; }

/* workspace */
.workspace { flex: 1; min-height: 0; display: flex; }
.viewer {
  flex: 1;
  min-width: 0;
  margin: 0 0 4px 4px;
  display: flex;
  flex-direction: column;
  border-radius: 9px;
  overflow: hidden;
  box-shadow: 0 0 2px rgba(0, 0, 0, .25);
}

/* pdf toolbar: 15px rhythm, with the wider gaps of the real bar added per item */
.pdf-toolbar {
  flex: none;
  height: 51px;
  background: #f7f7f7;
  border-bottom: 1px solid #bdbdbd;
  display: flex;
  align-items: center;
  gap: 15px;
  padding: 0 15px 0 17px;
}
.pdf-toolbar .ic-chev { width: 12px; height: 12px; color: #555; }
.sep { flex: none; width: 1px; height: 24px; background: #bbb; }
.sep-bold { width: 2px; }
.tool-label { font-size: 16.5px; letter-spacing: -.2px; white-space: nowrap; color: #222; }
.translate { width: 24px; font: 17px "Noto Sans CJK JP", "Noto Sans", sans-serif; white-space: nowrap; letter-spacing: -1.5px; }
.ic-minus { color: #777; stroke-width: 1.8; }
.ic-disabled { color: #bbb; }
.page-box {
  width: 50px;
  height: 40px;
  margin-left: -9px;
  background: #fff;
  border: 1px solid #c8c8c8;
  border-radius: 3px;
  display: flex;
  align-items: center;
  justify-content: center;
  font-size: 15px;
}
.page-of { margin-left: -3px; font-size: 15px; white-space: nowrap; letter-spacing: -.2px; }
.tools-end { margin-left: auto; }
.tb-hl { margin-left: -1.5px; }
.tb-pen { margin-left: 19px; }
.tb-draw { margin-left: -2px; }
.tb-chev2 { margin-left: 3px; }
.tb-eraser { margin-left: 13px; }
.tb-read { margin-left: 2px; }
.tb-ask { margin-left: 5px; font-size: 17px; }
.tb-zoomout { margin-left: 137px; }
.tb-zoomin { margin-left: 5px; }
.tb-fit { margin-left: 7px; }
.tb-s1 { margin-left: 1px; }
.tb-rot { margin-left: -1px; }
.tb-r6 { margin-left: 6px; }
.tb-r7 { margin-left: 7px; }

/* pdf body */
.pdf-row { flex: 1; min-height: 0; display: flex; }
.pdf-view {
  flex: 1;
  min-width: 0;
  position: relative;
  background: #e6e6e6;
  display: flex;
  justify-content: center;
  overflow: hidden;
}
.pdf-page {
  width: 947px;
  height: 100%;
  margin-right: 2px;
  background: #fff;
  padding: 0 38px 0 39px;
}
.page-rule {
  height: 100%;
  border-left: 2px solid #111;
  border-right: 2px solid #111;
  padding: 3px 0 0 91px;
}
.acrobat { position: absolute; right: 16px; bottom: 40px; width: 30px; height: 30px; }

.scrollbar {
  flex: none;
  width: 19px;
  background: #fdfdfd;
  display: flex;
  flex-direction: column;
  align-items: center;
}
.arrow-up, .arrow-down { width: 0; height: 0; border-left: 6.5px solid transparent; border-right: 6.5px solid transparent; }
.arrow-up { margin-top: 11px; border-bottom: 9px solid #888; }
.thumb { width: 11px; height: 21px; margin-top: 548px; border-radius: 5px; background: #8a8a8a; }
.arrow-down { margin-top: 271px; border-top: 9px solid #888; }

/* mock-up inside the pdf */
.mock {
  width: 665px;
  height: 900px;
  background: #fff;
  border-left: 1px solid #777;
  border-right: 1px solid #777;
  font-family: Lato, "Noto Sans", sans-serif;
  color: #333;
}
.mock-title {
  height: 20px;
  margin: 0 -1px;
  background: #444;
  border-radius: 3px 3px 0 0;
  position: relative;
  display: flex;
  align-items: center;
  justify-content: center;
}
.dots { position: absolute; left: 7px; top: 7px; display: flex; gap: 7px; }
.dots i { width: 6px; height: 6px; border-radius: 50%; background: #777; }
.mock-title-text { font-size: 7.5px; color: #ddd; }

.mock-head {
  height: 74px;
  margin: 0 2px;
  padding: 2px 0 0 21px;
  border-bottom: 1px solid #555;
  display: flex;
  align-items: flex-start;
}
.logo-box {
  position: relative;
  flex: none;
  border: 1px solid #444;
  display: flex;
  align-items: center;
  justify-content: center;
  font-size: 7px;
  color: #333;
}
.logo-box span { position: relative; }
.cross { position: absolute; inset: 0; width: 100%; height: 100%; fill: none; stroke: #555; stroke-width: 1; }
.logo-head { width: 64px; height: 64px; }
.logo-foot { width: 94px; height: 78px; }
.mock-nav {
  list-style: none;
  margin: 12px 0 0;
  padding: 0;
  display: flex;
  align-items: center;
  font-size: 7px;
  color: #222;
  height: 19px;
}
.mock-nav li { text-align: center; white-space: nowrap; }
.nav-home { width: 51px; margin-left: 38px; }
.nav-jobs { width: 59px; margin-left: 6px; height: 19px; line-height: 19px; background: #dfdfdf; border-radius: 10px; }
.nav-post { width: 50px; margin-left: 5px; }
.nav-about { width: 46px; margin-left: 13px; }
.nav-contact { width: 54px; margin-left: 9px; }
.mock-search {
  width: 95px;
  height: 17px;
  margin: 13px 0 0 53px;
  border: 1px solid #444;
  border-radius: 9px;
  display: flex;
  align-items: center;
  padding-left: 5px;
}
.ic-mini { width: 8px; height: 8px; stroke-width: 2; color: #777; }
.mock-user {
  width: 59px;
  margin: 3px 0 0 33px;
  display: flex;
  flex-direction: column;
  align-items: center;
  gap: 6px;
}
.user-icon { width: 32px; height: 32px; fill: none; stroke: #222; stroke-width: 1.100; }
.login {
  width: 59px;
  height: 20px;
  padding: 0;
  border: 0;
  border-radius: 3px;
  background: #0f6fff;
  color: #fff;
  font: 700 8px Lato, sans-serif;
}

.mock-body { padding: 11px 0 0 18px; }
.mock-body h1 {
  margin: 0 0 0 6px;
  font-size: 14.8px;
  line-height: 18px;
  font-weight: 700;
  color: #222;
}
.intro { display: block; width: 570px; height: 18px; margin: 10px 0 0 6px; }
.filters { display: flex; margin-top: 17px; }
.select {
  width: 155px;
  height: 24px;
  padding-left: 6px;
  background: #e6ecf3;
  border-radius: 2px;
  display: flex;
  align-items: center;
  font-size: 11px;
  color: #333;
}
.select-2 { margin: -1px 0 0 61px; height: 25px; }
.ic-sel { width: 13px; height: 13px; margin-left: auto; margin-right: 4px; color: #444; }

.cards {
  display: grid;
  grid-template-columns: 215px 211px 176px;
  grid-template-rows: 129px 124px 125px 182px;
  margin: 20px 0 0 -2px;
  height: 560px;
  align-items: start;
  justify-items: start;
}
.card {
  width: 175px;
  height: 113px;
  background: #f5f5f5;
  border-radius: 2px;
  overflow: hidden;
}
.card h2 {
  height: 30px;
  margin: 0;
  padding-left: 11px;
  background: #e0e0e0;
  border-bottom: 1px solid #cfcfcf;
  font-size: 11.3px;
  font-weight: 400;
  line-height: 28px;
  color: #222;
}
.job-text { display: block; width: 170px; height: 48px; margin: 3px 0 0 8px; opacity: .85; }
.apply {
  display: block;
  width: 54px;
  height: 23px;
  margin: 1px 0 0 55px;
  padding: 0;
  border: 0;
  border-radius: 4px;
  background: #1e90ff;
  color: #fff;
  font: 700 10.5px Lato, sans-serif;
}
.c1 { margin: 1px 0 0 1px; }
.c2 { margin: 1px 0 0 1px; }
.c3 { margin: 0 0 0 5px; }
.c4 { margin: 1px 0 0 1px; }
.c5 { margin: 0 0 0 2px; }
.c6 { margin: 2px 0 0 2px; }
.c7 { margin: 2px 0 0 0; }
.c8 { margin: 1px 0 0 2px; }
.c9 { margin: 0 0 0 2px; }
.c10 { margin: 4px 0 0 0; }
.c11 { margin: 1px 0 0 1px; }
.c12 { margin: 0; }

.mock-foot {
  margin: 0 4px 0 3px;
  padding: 8px 0 0 8px;
  border-top: 1px solid #555;
  display: flex;
  align-items: flex-start;
  font-size: 7.5px;
  line-height: 13px;
  color: #555;
}
.mock-foot strong { color: #333; font-weight: 700; }
.follow { width: 100px; margin: 5px 0 0 28px; text-align: center; display: flex; flex-direction: column; align-items: center; font-size: 8.4px; }
.socials { display: flex; gap: 18px; margin: 5px 0 0 18px; align-items: center; }
.soc {
  width: 11px;
  height: 11px;
  background: #333;
  border-radius: 2.500px;
  color: #fff;
  font: 700 9px/11px "Liberation Sans", sans-serif;
  text-align: right;
  padding-right: 1px;
}
.soc-g { font-size: 5.500px; text-align: center; padding: 0; }
.soc-svg { width: 11px; height: 11px; flex: none; }
.contact { width: 167px; margin: 5px 0 0 81.5px; display: flex; flex-direction: column; font-size: 7.7px; }
.address { width: 113.5px; margin-top: 1px; display: flex; flex-direction: column; line-height: 12.500px; font-size: 8.500px; white-space: nowrap; }
.link { margin-left: 2px; color: #3a8ac4; text-decoration: underline; }
.qr { width: 50px; height: 50px; flex: none; margin-top: -2px; }

/* sidebar */
.sidebar {
  flex: none;
  width: 55px;
  padding: 15px 0 16px;
  background: #f7f7f7;
  display: flex;
  flex-direction: column;
  align-items: center;
  gap: 24px;
}
.side-ic { width: 26px; height: 26px; flex: none; }
.side-rule { width: 35px; height: 1px; flex: none; background: #aaa; margin-top: 3px; }
.side-plus { margin-top: 3px; color: #444; }
.side-rule-low { margin-top: auto; }
.side-gear { margin-top: -8px; color: #111; }

/* taskbar */
.taskbar {
  flex: none;
  height: 60px;
  padding: 0 23px 0 29px;
  border-top: 1px solid #bdbdbd;
  background: linear-gradient(90deg, #eeeae6 0, #ece8e3 36%, #d1dfe8 58%, #d2dde6 80%, #d8dce6 100%);
  display: flex;
  align-items: center;
}
.weather { width: 24px; height: 30px; flex: none; }
.winlogo { width: 29px; height: 29px; flex: none; margin-left: 505px; }
.tb-search {
  width: 273px;
  height: 38px;
  margin-left: 17px;
  padding-left: 10px;
  border: 1px solid #c4ccd3;
  border-radius: 19px;
  background: #f5f6f7;
  display: flex;
  align-items: center;
  gap: 11px;
  font-size: 17px;
  color: #444;
}
.ic-tbsearch { color: #111; stroke-width: 2; }
.tb-apps { display: flex; gap: 8px; margin-left: 8px; }
.tb-slot {
  position: relative;
  width: 47px;
  height: 47px;
  border-radius: 5px;
  display: flex;
  align-items: center;
  justify-content: center;
}
.tb-ic { width: 30px; height: 30px; }
.tb-active { background: #e8eef2; }
.tb-ind { position: absolute; left: 14px; bottom: 1px; width: 19px; height: 3px; border-radius: 2px; background: #0a74d6; }
.app-m {
  width: 30px;
  height: 30px;
  background: linear-gradient(135deg, #1f7ff0, #6a2cf0);
  color: #fff;
  font: italic 700 19px/30px "Liberation Sans", sans-serif;
  text-align: center;
}
.app-dev {
  width: 30px;
  height: 36px;
  border-radius: 50%;
  background: #bf1a1f;
  color: #fff;
  font: 700 11px/13px "Liberation Sans", sans-serif;
  text-align: center;
  padding-top: 5px;
}
.badge {
  position: absolute;
  left: 23px;
  top: -3px;
  width: 24px;
  height: 24px;
  border-radius: 50%;
  background: #0078d4;
  color: #fff;
  font: 400 14px/24px "Noto Sans", sans-serif;
  text-align: center;
  letter-spacing: -.5px;
}
.teams-text { font: 700 11px "Liberation Sans", sans-serif; fill: #fff; text-anchor: middle; }
.outlook-text { font: 700 10px "Liberation Sans", sans-serif; fill: #fff; text-anchor: middle; }
.tray { margin-left: auto; display: flex; align-items: center; }
.tray-ic { width: 20px; height: 20px; flex: none; color: #222; }
.tr-10 { margin-left: 10px; }
.tr-19 { margin-left: 19px; }
.tr-20 { margin-left: 20px; }
.tr-21 { margin-left: 21px; }
.tray-orange { fill: #f08a10; stroke: none; }
.clock {
  margin-left: 20px;
  display: flex;
  flex-direction: column;
  align-items: flex-end;
  font-size: 15px;
  line-height: 19px;
  letter-spacing: -.2px;
  white-space: nowrap;
  color: #222;
}
.bell { width: 24px; height: 24px; margin-left: 8px; flex: none; }
```
